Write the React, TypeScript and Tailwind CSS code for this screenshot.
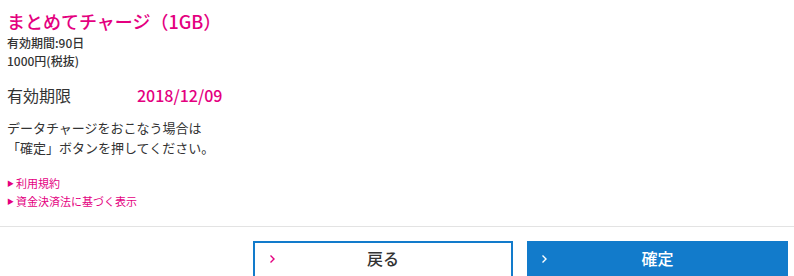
const PINK = "text-[#e4007f]";

function Chevron({ className }: { className?: string }) {
  return (
    <svg width="7" height="10" viewBox="0 0 7 10" className={className} fill="none">
      <path d="M1.5 1.5 L5 5 L1.5 8.5" stroke="currentColor" strokeWidth="1.4" />
    </svg>
  );
}

function LinkItem({ label }: { label: string }) {
  return (
    <a href="#" className={`flex items-center gap-[2px] text-[11px] leading-[18px] ${PINK}`}>
      <span className="text-[7px] leading-none">▶</span>
      {label}
    </a>
  );
}

export default function App() {
  return (
    <div
      className="w-[794px] bg-white text-[#333]"
      style={{ fontFamily: '"Noto Sans CJK JP", "Noto Sans", sans-serif' }}
    >
      <div className="px-[7px] pt-[8px] pb-[16px]">
        <h1 className={`text-[18px] leading-[26px] font-medium ${PINK}`}>まとめてチャージ（1GB）</h1>
        <p className="text-[12px] leading-[18px] font-medium">有効期間:90日</p>
        <p className="text-[12px] leading-[18px] font-medium">1000円(税抜)</p>

        <div className="mt-[13px] flex items-center leading-[24px]">
          <span className="w-[130px] text-[16px]">有効期限</span>
          <span className={`text-[16px] font-medium ${PINK}`}>2018/12/09</span>
        </div>

        <p className="mt-[11px] text-[13px] leading-[20px]">
          データチャージをおこなう場合は
          <br />
          「確定」ボタンを押してください。
        </p>

        <div className="mt-[16px] flex flex-col items-start">
          <LinkItem label="利用規約" />
          <LinkItem label="資金決済法に基づく表示" />
        </div>
      </div>

      <div className="border-t border-[#e3e3e3] pt-[14px] pr-[6px] flex justify-end gap-[14px]">
        <button className="relative w-[260px] h-[46px] border-2 border-[#127bcb] bg-white flex items-start justify-center pt-[3px] text-[16px] leading-[24px] font-medium text-[#333]">
          <Chevron className={`absolute left-[14px] top-[11px] ${PINK}`} />
          戻る
        </button>
        <button className="relative w-[261px] h-[46px] bg-[#127bcb] flex items-start justify-center pt-[5px] text-[16px] leading-[24px] font-medium text-white">
          <Chevron className="absolute left-[14px] top-[13px] text-white" />
          確定
        </button>
      </div>
    </div>
  );
}
